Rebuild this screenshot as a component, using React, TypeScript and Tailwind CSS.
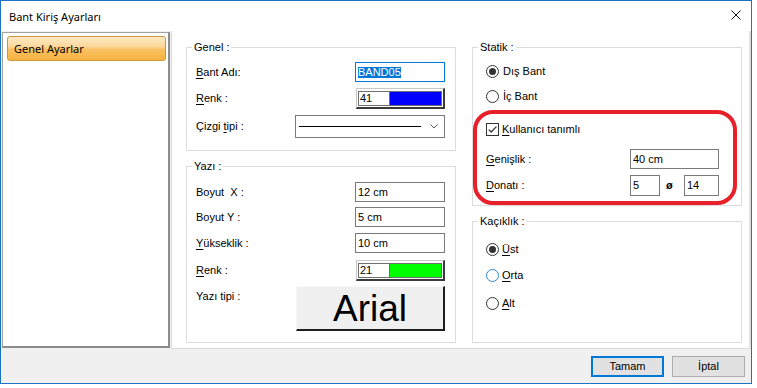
import React from "react";

function U({ c }: { c: string }) {
  return <span className="underline decoration-1 underline-offset-[2px]">{c}</span>;
}

function Radio({ checked, focus }: { checked?: boolean; focus?: boolean }) {
  return (
    <span
      className={`flex h-[13px] w-[13px] shrink-0 items-center justify-center rounded-full border bg-white ${
        focus ? "border-[#2b88d8]" : "border-[#333333]"
      }`}
    >
      {checked && <span className="h-[7px] w-[7px] rounded-full bg-[#333333]" />}
    </span>
  );
}

function TextBox({ w, h, text }: { w: string; h: string; text: string }) {
  return (
    <div className={`${w} ${h} flex items-center border border-[#7a7a7a] bg-white pl-[2px] text-black`}>{text}</div>
  );
}

function ColorBox({ num, color }: { num: string; color: string }) {
  return (
    <div className="flex h-[21px] w-[89px] border-l border-t border-[#c8c8c8] border-b-2 border-r-2 border-b-[#3a3a3a] border-r-[#3a3a3a] bg-white pl-[1px] pt-[2px] pr-[1px] pb-[1px]">
      <div className="flex flex-1 border border-[#6e6e6e]">
        <div className="flex w-[30px] items-center bg-white pl-[1px] leading-none">{num}</div>
        <div className={`flex-1 border-l border-[#6e6e6e] ${color}`} />
      </div>
    </div>
  );
}

function Group({
  title,
  h,
  children,
}: {
  title: string;
  h: string;
  children: React.ReactNode;
}) {
  return (
    <fieldset className={`w-[270px] ${h} border border-[#dcdcdc]`}>
      <legend className="ml-[5px] px-[2px] leading-[14px]">{title}</legend>
      {children}
    </fieldset>
  );
}

export default function App() {
  return (
    <div className="min-h-[388px] w-[757px] bg-white font-['Liberation_Sans',Arial,sans-serif] text-[11px] leading-[13px] text-black">
      <div className="flex h-[384px] w-[752px] flex-col border border-[#1a73c4] bg-[#f0f0f0]">
        {/* Title bar */}
        <div className="flex h-[30px] shrink-0 items-start justify-between bg-white pl-[8px] pr-[10px]">
          <span className="mt-[8px] font-['Noto_Sans',sans-serif] text-[11px] leading-[15px] text-black">
            Bant Kiriş Ayarları
          </span>
          <svg className="mt-[9px]" width="10" height="10" viewBox="0 0 10 10">
            <path d="M0.5 0.5 L9.5 9.5 M9.5 0.5 L0.5 9.5" stroke="#111" strokeWidth="1" fill="none" />
          </svg>
        </div>

        {/* Main area */}
        <div className="flex h-[318px] shrink-0">
          {/* Left tree panel */}
          <div className="ml-[1px] mt-[1px] h-[316px] w-[168px] border-l border-t border-[#a0a0a0] border-b-2 border-r-2 border-b-[#8c8c8c] border-r-[#8c8c8c] bg-white">
            <div className="ml-[4px] mt-[3px] flex h-[25px] w-[159px] items-center rounded-[3px] border border-[#c9973f] bg-[linear-gradient(to_bottom,#fee9c4_0%,#fdd99c_40%,#f9c062_55%,#f7b23f_100%)] pl-[6px] font-['Noto_Sans',sans-serif] text-[11px] text-black">
              Genel Ayarlar
            </div>
          </div>

          {/* Right content panel */}
          <div className="ml-[1px] flex h-[318px] flex-1 gap-[16px] border-b border-l border-[#d9d9d9] border-r-2 border-r-[#e2e2e2] bg-white pl-[14px] pt-[9px]">
            {/* Left column */}
            <div className="flex w-[270px] flex-col gap-[8px]">
              <Group title="Genel :" h="h-[111px]">
                <div className="px-[10px] pl-[9px]">
                  <div className="mt-[8px] flex h-[20px] items-center justify-between">
                    <span>
                      <U c="B" />ant Adı:
                    </span>
                    <div className="flex h-[20px] w-[90px] items-center border border-[#0078d7] bg-white pl-[2px]">
                      <span className="bg-[#0078d7] leading-[11px] text-white">BAND05</span>
                    </div>
                  </div>
                  <div className="mt-[6px] flex h-[21px] items-center justify-between">
                    <span>
                      <U c="R" />enk :
                    </span>
                    <ColorBox num="41" color="bg-[#0000ff]" />
                  </div>
                  <div className="mt-[6px] flex h-[23px] items-center justify-between">
                    <span>
                      Çizgi <U c="t" />ipi :
                    </span>
                    <div className="flex h-[23px] w-[150px] items-center border border-[#7a7a7a] bg-white pl-[3px] pr-[6px]">
                      <div className="h-px w-[122px] bg-black" />
                      <svg className="ml-auto" width="8" height="5" viewBox="0 0 8 5">
                        <path d="M0.5 0.5 L4 4 L7.5 0.5" stroke="#555" strokeWidth="1" fill="none" />
                      </svg>
                    </div>
                  </div>
                </div>
              </Group>

              <Group title="Yazı :" h="h-[184px]">
                <div className="pl-[9px] pr-[10px]">
                  <div className="mt-[9px] flex h-[20px] items-center justify-between">
                    <span className="whitespace-pre">Boyut  X :</span>
                    <TextBox w="w-[90px]" h="h-[20px]" text="12 cm" />
                  </div>
                  <div className="mt-[5px] flex h-[20px] items-center justify-between">
                    <span>Boyut Y :</span>
                    <TextBox w="w-[90px]" h="h-[20px]" text="5 cm" />
                  </div>
                  <div className="mt-[6px] flex h-[20px] items-center justify-between">
                    <span>
                      <U c="Y" />ükseklik :
                    </span>
                    <TextBox w="w-[90px]" h="h-[20px]" text="10 cm" />
                  </div>
                  <div className="mt-[7px] flex h-[21px] items-center justify-between">
                    <span>
                      <U c="R" />enk :
                    </span>
                    <ColorBox num="21" color="bg-[#00ff00]" />
                  </div>
                  <div className="mt-[5px] flex h-[45px] items-start justify-between">
                    <span className="mt-[4px]">Yazı tipi :</span>
                    <div className="flex h-[45px] w-[149px] items-center justify-center border-l border-t border-[#f7f7f7] border-b-2 border-r-2 border-b-[#1e1e1e] border-r-[#1e1e1e] bg-[#f0f0f0] text-[37px] leading-none">
                      Arial
                    </div>
                  </div>
                </div>
              </Group>
            </div>

            {/* Right column */}
            <div className="relative flex w-[270px] flex-col gap-[8px]">
              <Group title="Statik :" h="h-[166px]">
                <div className="pl-[13px] pr-[22px]">
                  <div className="mt-[11px] flex h-[13px] items-center gap-[4px]">
                    <Radio checked />
                    <span>Dış Bant</span>
                  </div>
                  <div className="mt-[12px] flex h-[13px] items-center gap-[4px]">
                    <Radio />
                    <span>İç Bant</span>
                  </div>
                  <div className="mt-[20px] flex h-[13px] items-center gap-[3px]">
                    <span className="flex h-[13px] w-[13px] items-center justify-center border border-[#333333] bg-white">
                      <svg width="11" height="11" viewBox="0 0 11 11">
                        <path d="M1.8 5.6 L4.2 8 L9.4 2.6" fill="none" stroke="#333" strokeWidth="1.3" />
                      </svg>
                    </span>
                    <span>
                      <U c="K" />ullanıcı tanımlı
                    </span>
                  </div>
                  <div className="mt-[13px] flex h-[20px] items-center justify-between">
                    <span>
                      <U c="G" />enişlik :
                    </span>
                    <TextBox w="w-[89px]" h="h-[20px]" text="40 cm" />
                  </div>
                  <div className="mt-[6px] flex h-[21px] items-center justify-between">
                    <span>
                      <U c="D" />onatı :
                    </span>
                    <div className="flex w-[89px] items-center">
                      <TextBox w="w-[30px]" h="h-[21px]" text="5" />
                      <span className="ml-[6px] w-[6px] text-[11px] font-bold">ø</span>
                      <div className="ml-auto">
                        <TextBox w="w-[35px]" h="h-[21px]" text="14" />
                      </div>
                    </div>
                  </div>
                </div>
              </Group>

              <Group title="Kaçıklık :" h="h-[129px]">
                <div className="pl-[13px]">
                  <div className="mt-[15px] flex h-[13px] items-center gap-[3px]">
                    <Radio checked />
                    <span>
                      <U c="Ü" />st
                    </span>
                  </div>
                  <div className="mt-[13px] flex h-[13px] items-center gap-[3px]">
                    <Radio focus />
                    <span>
                      <U c="O" />rta
                    </span>
                  </div>
                  <div className="mt-[15px] flex h-[13px] items-center gap-[3px]">
                    <Radio />
                    <span>
                      <U c="A" />lt
                    </span>
                  </div>
                </div>
              </Group>

              {/* Red annotation */}
              <div className="pointer-events-none absolute left-[1px] top-[70px] h-[95px] w-[264px] rounded-[20px] border-4 border-[#e8202a]" />
            </div>
          </div>
        </div>

        {/* Bottom buttons */}
        <div className="flex h-[34px] shrink-0 items-start justify-end gap-[8px] pr-[6px] pt-[7px]">
          <div className="flex h-[21px] w-[73px] items-center justify-center border-2 border-[#0078d7] bg-[#e1e1e1]">
            Tamam
          </div>
          <div className="flex h-[21px] w-[73px] items-center justify-center border border-[#adadad] bg-[#e1e1e1]">
            İptal
          </div>
        </div>
      </div>
    </div>
  );
}
